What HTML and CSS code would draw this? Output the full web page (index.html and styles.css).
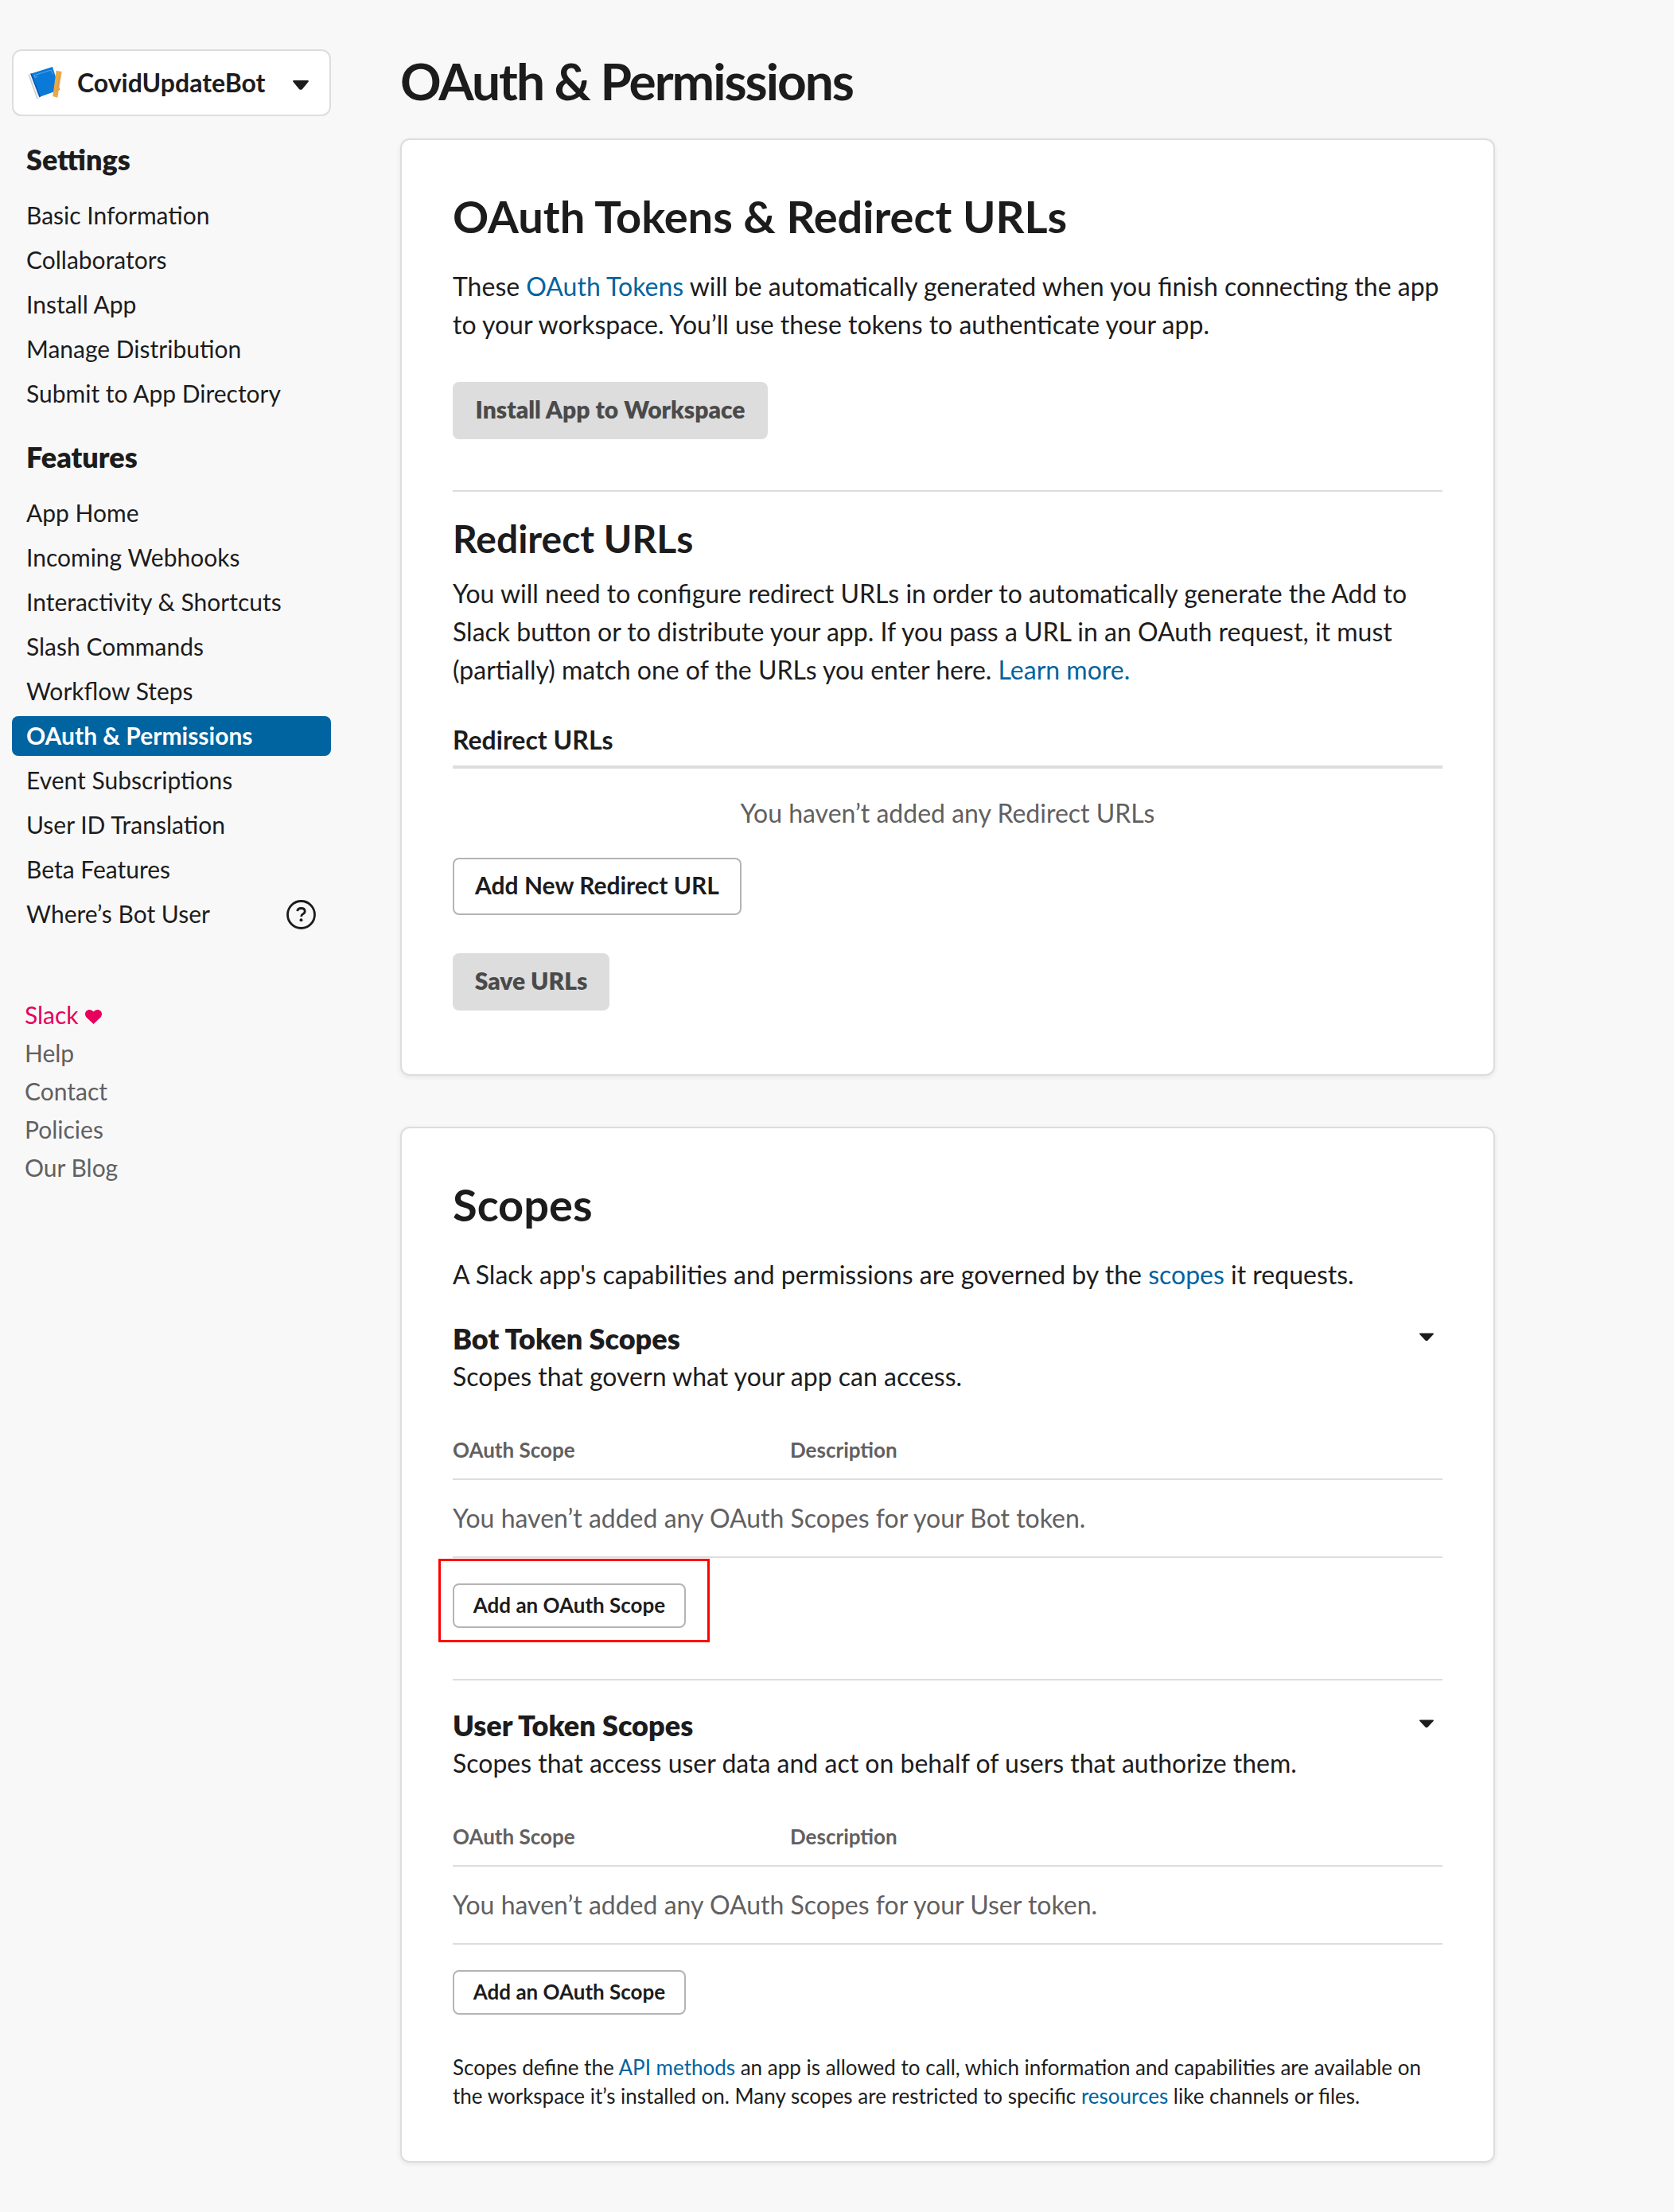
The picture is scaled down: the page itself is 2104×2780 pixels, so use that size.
FILE: index.html
```html
<!DOCTYPE html>
<html lang="en">
<head>
<meta charset="utf-8">
<title>OAuth &amp; Permissions</title>
<link rel="stylesheet" href="styles.css">
</head>
<body>
<div class="page">
  <aside class="sidebar">
    <button class="app-picker">
      <svg class="app-icon" viewBox="15 18 132 132" aria-hidden="true">
        <path d="M16 53l10-4 34 92-11 5z" fill="#cfcfd2"/>
        <path d="M20 51l6-2 33 92-6 3z" fill="#f1f1f2"/>
        <path d="M25 50L108 24l27 86-77 28z" fill="#0a7ad8"/>
        <path d="M25 50l4-1 34 88-4 2z" fill="#0b55a8"/>
        <path d="M39 56l64-20 6 16M39 56l3 8 10-4" fill="none" stroke="#79bdf0" stroke-width="2"/>
        <path d="M122 38l21 4-16 98-18-5z" fill="#e9a94a"/>
        <path d="M134 60l-9 58" stroke="#b98335" stroke-width="2.500" stroke-dasharray="3 3"/>
      </svg>
      <span class="app-name">CovidUpdateBot</span>
      <svg class="picker-caret" viewBox="0 0 20 12" aria-hidden="true"><path d="M1.300 0h17.400q2 .4.700 2L12 11q-2 1.700-4 0L.6 2Q-.7.400 1.300 0z"/></svg>
    </button>
    <nav>
      <h4 class="nav-title">Settings</h4>
      <ul class="nav-list">
        <li><a>Basic Information</a></li>
        <li><a>Collaborators</a></li>
        <li><a>Install App</a></li>
        <li><a>Manage Distribution</a></li>
        <li><a>Submit to App Directory</a></li>
      </ul>
      <h4 class="nav-title">Features</h4>
      <ul class="nav-list">
        <li><a>App Home</a></li>
        <li><a>Incoming Webhooks</a></li>
        <li><a>Interactivity &amp; Shortcuts</a></li>
        <li><a>Slash Commands</a></li>
        <li><a>Workflow Steps</a></li>
        <li><a class="active">OAuth &amp; Permissions</a></li>
        <li><a>Event Subscriptions</a></li>
        <li><a>User ID Translation</a></li>
        <li><a>Beta Features</a></li>
        <li><a>Where’s Bot User
          <svg class="help-icon" viewBox="0 0 37 37" aria-hidden="true">
            <circle cx="18.500" cy="18.500" r="17"/>
            <path d="M13.800 14.200q.3-3.700 4.700-3.700 4.700 0 4.700 3.800 0 2.200-2.500 3.500-2 1.100-2 3.300"/>
            <circle class="dot" cx="18.500" cy="25.300" r="2"/>
          </svg></a></li>
      </ul>
    </nav>
    <ul class="site-links">
      <li class="brand">Slack <svg class="heart" viewBox="0 0 21 18" aria-hidden="true"><path d="M10.500 18L1.500 9.500C-.6 7.200-.3 3.400 1.600 1.600 4-.7 8-.5 10.500 2.600 13-.5 17-.7 19.400 1.600c1.900 1.800 2.200 5.600.1 7.900z"/></svg></li>
      <li>Help</li>
      <li>Contact</li>
      <li>Policies</li>
      <li>Our Blog</li>
    </ul>
  </aside>

  <main class="content">
    <h1>OAuth &amp; Permissions</h1>

    <section class="card">
      <h2>OAuth Tokens &amp; Redirect URLs</h2>
      <p>These <a>OAuth Tokens</a> will be automatically generated when you finish connecting the app to your workspace. You’ll use these tokens to authenticate your app.</p>
      <button class="btn disabled install">Install App to Workspace</button>
      <hr class="rule">
      <h3>Redirect URLs</h3>
      <p>You will need to configure redirect URLs in order to automatically generate the Add to Slack button or to distribute your app. If you pass a URL in an OAuth request, it must (partially) match one of the URLs you enter here. <a>Learn more.</a></p>
      <div class="url-head">Redirect URLs</div>
      <div class="url-empty">You haven’t added any Redirect URLs</div>
      <button class="btn outline add-url">Add New Redirect URL</button>
      <button class="btn disabled save">Save URLs</button>
    </section>

    <section class="card scopes">
      <h2>Scopes</h2>
      <p>A Slack app's capabilities and permissions are governed by the <a>scopes</a> it requests.</p>

      <div class="scope-group">
        <div class="scope-title"><h4>Bot Token Scopes</h4>
          <svg class="caret" viewBox="0 0 18 10" aria-hidden="true"><path d="M1 0h16q1.600.4.600 1.600L10.600 9q-1.600 1.500-3.200 0L.4 1.600Q-.6.400 1 0z"/></svg></div>
        <p>Scopes that govern what your app can access.</p>
        <div class="scope-head"><span>OAuth Scope</span><span>Description</span></div>
        <div class="scope-row">You haven’t added any OAuth Scopes for your Bot token.</div>
        <div class="highlight-anchor">
          <button class="btn small outline">Add an OAuth Scope</button>
          <span class="highlight"></span>
        </div>
      </div>

      <hr class="rule">

      <div class="scope-group">
        <div class="scope-title"><h4>User Token Scopes</h4>
          <svg class="caret" viewBox="0 0 18 10" aria-hidden="true"><path d="M1 0h16q1.600.4.600 1.600L10.600 9q-1.600 1.500-3.200 0L.4 1.600Q-.6.400 1 0z"/></svg></div>
        <p>Scopes that access user data and act on behalf of users that authorize them.</p>
        <div class="scope-head"><span>OAuth Scope</span><span>Description</span></div>
        <div class="scope-row">You haven’t added any OAuth Scopes for your User token.</div>
        <button class="btn small outline">Add an OAuth Scope</button>
      </div>

      <p class="note">Scopes define the <a>API methods</a> an app is allowed to call, which information and capabilities are available on the workspace it’s installed on. Many scopes are restricted to specific <a>resources</a> like channels or files.</p>
    </section>
  </main>
</div>
</body>
</html>
```

FILE: styles.css
```css
* { box-sizing: border-box; margin: 0; padding: 0; }

body {
  background: #f8f8f8;
  color: #1d1c1d;
  font-family: Lato, "Liberation Sans", sans-serif;
  font-size: 32px;
  line-height: 48px;
}

ul { list-style: none; }
a { color: #0064a0; }
button { font: inherit; color: inherit; }

.page {
  display: flex;
  align-items: flex-start;
  gap: 87px;
  min-height: 2780px;
  padding: 62px 0 62px 15px;
}

/* Sidebar */
.sidebar { width: 401px; }

.app-picker {
  display: flex;
  align-items: center;
  width: 100%;
  height: 84px;
  padding: 0 26px 0 18px;
  background: #fff;
  border: 2px solid #ddd;
  border-radius: 12px;
  font-weight: 700;
}
.app-icon { width: 44px; height: 44px; margin-right: 18px; }
.app-name { flex: 1; text-align: left; }
.picker-caret { width: 20px; height: 12px; fill: #1d1c1d; margin-top: 5px; }

.nav-title {
  margin-top: 30px;
  padding-left: 18px;
  font-size: 36px;
  font-weight: 800;
  line-height: 48px;
}
.nav-list { display: grid; gap: 6px; margin-top: 22px; }
.nav-list a {
  display: flex;
  justify-content: space-between;
  align-items: center;
  height: 50px;
  padding: 0 19px 2px 18px;
  border-radius: 8px;
  color: inherit;
  font-size: 30px;
}
.nav-list .active { background: #0064a0; color: #fff; font-weight: 700; }

.help-icon { width: 37px; height: 37px; margin-top: 2px; fill: none; stroke: #1d1c1d; stroke-width: 2.8; }
.help-icon .dot { fill: #1d1c1d; stroke: none; }

.site-links { margin-top: 77px; padding-left: 16px; font-size: 30px; color: #616061; }
.brand { color: #e8005a; }
.heart { width: 21px; height: 18px; margin-left: 1px; fill: #e8005a; }

/* Main column */
.content { width: 1376px; }

h1 {
  margin-bottom: 32px;
  font-size: 64px;
  font-weight: 700;
  letter-spacing: -2px;
  line-height: 80px;
}
h2 { margin-bottom: 32px; font-size: 56px; font-weight: 700; line-height: 64px; }
h3 { margin-bottom: 17px; font-size: 48px; font-weight: 700; line-height: 56px; }
h4 { font-size: 36px; font-weight: 800; }

.card {
  height: 1178px;
  padding: 64px;
  background: #fff;
  border: 2px solid #ddd;
  border-radius: 12px;
  box-shadow: 0 2px 6px rgba(0, 0, 0, .08);
}
.card.scopes { height: 1302px; margin-top: 64px; }

.btn {
  display: block;
  height: 72px;
  padding-bottom: 4px;
  border: 0;
  border-radius: 8px;
  font-size: 30px;
  font-weight: 800;
  white-space: nowrap;
}
.btn.disabled { background: #ddd; color: #4a4a4b; }
.btn.outline { background: #fff; border: 2px solid #b4b4b5; font-weight: 700; }
.btn.install { width: 396px; margin-top: 48px; }
.btn.add-url { width: 363px; margin-top: 32px; }
.btn.save { width: 197px; margin-top: 48px; }
.btn.small { width: 293px; height: 56px; margin-top: 32px; padding-bottom: 2px; font-size: 26px; }

.rule { height: 2px; border: 0; background: #ddd; margin: 64px 0 31px; }

.url-head {
  height: 60px;
  margin-top: 40px;
  border-bottom: 4px solid #ddd;
  font-weight: 700;
}
.url-empty { margin-top: 32px; text-align: center; color: #616061; }

.scope-title {
  display: flex;
  justify-content: space-between;
  padding-right: 11px;
  margin-top: 32px;
}
.scope-title .caret { width: 18px; height: 11px; margin-top: 17px; fill: #1d1c1d; }
.scope-head {
  display: grid;
  grid-template-columns: 424px 1fr;
  height: 62px;
  margin-top: 44px;
  border-bottom: 2px solid #ddd;
  color: #616061;
  font-size: 26px;
  font-weight: 700;
}
.scope-row { height: 98px; border-bottom: 2px solid #ddd; color: #616061; line-height: 96px; }

/* Red frame drawn over the first "Add an OAuth Scope" button */
.highlight-anchor { position: relative; }
.highlight { position: absolute; top: -31px; left: -18px; width: 341px; height: 105px; border: 3px solid #f00; }

.note { margin-top: 48px; font-size: 26px; line-height: 36px; }
```
